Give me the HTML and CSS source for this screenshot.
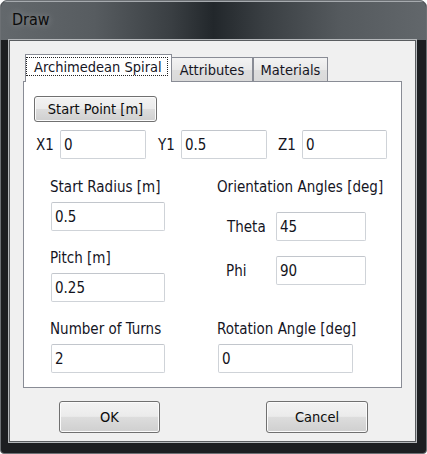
FILE: index.html
```html
<!DOCTYPE html>
<html>
<head>
<meta charset="utf-8">
<title>Draw</title>
<link rel="stylesheet" href="styles.css">
</head>
<body>
<div class="window">
  <div class="titlebar"><span class="title">Draw</span></div>
  <div class="frame">
    <div class="client">
      <div class="tabs">
        <div class="tab active"><span class="focus">Archimedean Spiral</span></div>
        <div class="tab attr">Attributes</div>
        <div class="tab mat">Materials</div>
      </div>
      <div class="panel">
        <button class="btn start">Start Point [m]</button>
        <div class="xyz">
          <span class="lbl lx">X1</span><input class="field w86" type="text" value="0">
          <span class="lbl ly">Y1</span><input class="field w86" type="text" value="0.5">
          <span class="lbl lz">Z1</span><input class="field w85" type="text" value="0">
        </div>
        <div class="cols">
          <div class="col left">
            <span class="lbl">Start Radius [m]</span>
            <input class="field w114 below" type="text" value="0.5">
            <span class="lbl next">Pitch [m]</span>
            <input class="field w114 below" type="text" value="0.25">
            <span class="lbl next">Number of Turns</span>
            <input class="field w114 below" type="text" value="2">
          </div>
          <div class="col right">
            <span class="lbl">Orientation Angles [deg]</span>
            <div class="angle theta"><span class="lbl al">Theta</span><input class="field w90" type="text" value="45"></div>
            <div class="angle phi"><span class="lbl al pl">Phi</span><input class="field w90" type="text" value="90"></div>
            <span class="lbl rot">Rotation Angle [deg]</span>
            <input class="field w135 below" type="text" value="0">
          </div>
        </div>
      </div>
      <div class="actions">
        <button class="btn ok">OK</button>
        <button class="btn cancel">Cancel</button>
      </div>
    </div>
  </div>
</div>
</body>
</html>
```
FILE: styles.css
```css
* { box-sizing: border-box; }
body {
  margin: 0;
  background: #ffffff;
  font-family: "DejaVu Sans Condensed", "DejaVu Sans", sans-serif;
  font-size: 15px;
  color: #15151f;
}
.window {
  width: 427px;
  height: 454px;
  border: 1px solid #6c7074;
  border-radius: 7px 7px 4px 4px;
  background: #1c1e21;
  overflow: hidden;
  display: flex;
  flex-direction: column;
}
.titlebar {
  flex: none;
  height: 39px;
  padding: 9px 0 0 11px;
  background: linear-gradient(90deg, #63686c 0%, #575c60 22%, #3a3f43 40%, #22272b 50%, #3a3f43 62%, #555a5e 80%, #62676b 100%);
  box-shadow: inset 0 1px 0 #a6aaae;
}
.title {
  font-size: 16px;
  line-height: 20px;
  color: #0c0c0c;
  text-shadow: 0 0 7px rgba(255,255,255,0.35);
}
.frame {
  flex: 1;
  padding: 0 10px 11px 8px;
}
.client {
  height: 100%;
  border: 1px solid #5a5d60;
  box-shadow: 0 0 0 1px #b4b7ba;
  background: #f0f0f0;
  padding: 13px 13px 0 13px;
}
.tabs {
  display: flex;
  align-items: flex-end;
  height: 27px;
  padding-left: 2px;
  position: relative;
  z-index: 1;
}
.tab {
  border: 1px solid #898c95;
  border-bottom: none;
  font-size: 14.5px;
  line-height: 16px;
  white-space: nowrap;
}
.tab.active {
  width: 147px;
  height: 28px;
  margin-bottom: -1px;
  background: #ffffff;
  padding: 2px 0 0 0;
}
.focus {
  display: block;
  width: 142px;
  height: 19px;
  border: 1px dotted #222;
  padding: 1px 0 0 7px;
}
.tab.attr, .tab.mat {
  height: 24px;
  padding-top: 4px;
  text-align: center;
  background: linear-gradient(#f3f3f3, #e9e9e9 50%, #dedede 51%, #d9d9d9);
}
.tab.attr { width: 81px; border-left: none; }
.tab.mat { width: 75px; }
.panel {
  height: 307px;
  border: 1px solid #898c95;
  background: #ffffff;
  padding: 14px 0 0 10px;
}
.btn {
  font-family: inherit;
  font-size: 14.5px;
  color: #0c0c0c;
  padding: 0;
  border: 1px solid #707070;
  border-radius: 3px;
  background: linear-gradient(#f3f3f3 0%, #ebebeb 48%, #dddddd 50%, #cfcfcf 100%);
  box-shadow: inset 0 0 0 1px #fbfbfb;
}
.start { display: block; width: 123px; height: 26px; }
.lbl { line-height: 16px; white-space: nowrap; }
.field {
  font-family: inherit;
  font-size: 15px;
  color: #141420;
  height: 29px;
  padding: 0 3px;
  border: 1px solid #cfd3d8;
  border-top-color: #c2c6cc;
  border-radius: 2px;
  background: #ffffff;
  outline: none;
}
.w85 { width: 85px; }
.w86 { width: 86px; }
.w90 { width: 90px; }
.w114 { width: 114px; }
.w135 { width: 135px; }
.xyz {
  display: flex;
  align-items: center;
  margin-top: 8px;
}
.lx { width: 24px; margin-left: 2px; }
.ly { width: 23px; margin-left: 12px; }
.lz { width: 24px; margin-left: 11px; }
.cols {
  display: flex;
  margin-top: 20px;
}
.col {
  display: flex;
  flex-direction: column;
  align-items: flex-start;
}
.col.left { width: 167px; margin-left: 16px; }
.below { margin-top: 7px; margin-left: 1px; }
.next { margin-top: 19px; }
.angle { display: flex; align-items: center; }
.theta { margin-top: 17px; }
.phi { margin-top: 15px; }
.al { width: 59px; padding-left: 10px; }
.al.pl { padding-left: 9px; }
.rot { margin-top: 36px; }
.actions {
  display: flex;
  margin-top: 13px;
  padding-left: 36px;
}
.ok { width: 101px; height: 32px; }
.cancel { width: 102px; height: 32px; margin-left: 106px; }
```
